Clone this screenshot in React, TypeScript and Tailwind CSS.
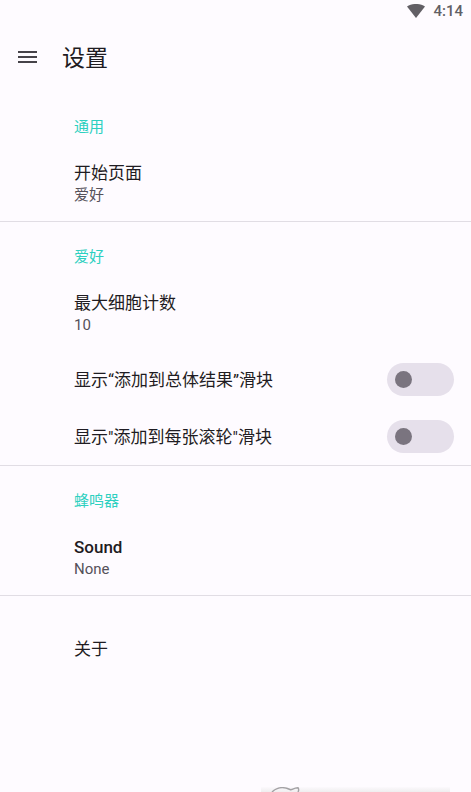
import type { ReactNode } from 'react'
import clsx from 'clsx'

type SectionProps = { title: string; children: ReactNode }
type RowProps = { title: string; value: string; medium?: boolean }
type SwitchRowProps = { id: string; label: string }

function Section({ title, children }: SectionProps) {
  return (
    <section className="border-b border-[#e1dde4]">
      <h2 className="pt-6 pb-[7px] pl-[74px] text-[15px] leading-[22px] text-[#2dd0c0]">{title}</h2>
      {children}
    </section>
  )
}

function Row({ title, value, medium }: RowProps) {
  return (
    <button type="button" className="block w-full py-4 pr-4 pl-[74px] text-left">
      <span className={clsx('block text-[17px] leading-6 text-[#1f1c22]', medium && 'font-medium')}>{title}</span>
      <span className="block text-[15px] leading-5 text-[#55515a]">{value}</span>
    </button>
  )
}

function SwitchRow({ id, label }: SwitchRowProps) {
  return (
    <div className="flex h-[57px] items-center justify-between pr-[17px] pl-[74px]">
      <label htmlFor={id} className="text-[17px] leading-6 text-[#1f1c22]">{label}</label>
      <input
        id={id}
        type="checkbox"
        role="switch"
        className="flex h-[33px] w-[67px] shrink-0 appearance-none items-center rounded-full bg-[#e6e0eb] px-2 before:h-[17px] before:w-[17px] before:rounded-full before:bg-[#7a747f] checked:justify-end"
      />
    </div>
  )
}

export default function App() {
  return (
    <div className="flex min-h-screen flex-col overflow-hidden bg-[#fefbff] font-['Roboto','Noto_Sans_CJK_SC',sans-serif]" lang="zh-CN">
      <div className="flex h-[22px] items-center justify-end gap-2 pr-2 text-[#625f65]">
        <svg width="18" height="15" viewBox="0 0 18 15" fill="currentColor" aria-hidden="true">
          <path d="M0 2.5C5-.9 13-.9 18 2.5L9 14Z" />
        </svg>
        <span className="text-[15px] leading-5 font-medium">4:14</span>
      </div>

      <header className="flex h-[70px] items-center gap-6 pl-[18px]">
        <button type="button" aria-label="菜单" className="text-[#464349]">
          <svg width="20" height="14" viewBox="0 0 20 14" fill="currentColor" aria-hidden="true">
            <path d="M0 1h19v2H0zM0 6h19v2H0zM0 11h19v2H0z" />
          </svg>
        </button>
        <h1 className="pt-1 text-[23px] leading-8 text-[#1f1c22]">设置</h1>
      </header>

      <main>
        <Section title="通用">
          <Row title="开始页面" value="爱好" />
        </Section>

        <Section title="爱好">
          <Row title="最大细胞计数" value="10" />
          <SwitchRow id="show-total" label="显示“添加到总体结果”滑块" />
          <SwitchRow id="show-each" label={'显示"添加到每张滚轮"滑块'} />
        </Section>

        <Section title="蜂鸣器">
          <Row title="Sound" value="None" medium />
        </Section>

        <button type="button" className="mt-6 flex h-[57px] w-full items-center pl-[74px] text-[17px] leading-6 text-[#1f1c22]">
          关于
        </button>
      </main>

      <div className="mt-auto mr-[21px] ml-[261px] h-[5px] bg-gradient-to-b from-[#fcf9fd] to-[#efeeef]">
        <svg width="40" height="5" viewBox="0 0 40 5" fill="none" stroke="#a3a1a4" strokeWidth="1.4" className="ml-2" aria-hidden="true">
          <path d="M3 5C8 .2 15-.2 21 2.5C23 3.5 24 1 29 .8C30 2 30 3 29 5" />
        </svg>
      </div>
    </div>
  )
}
